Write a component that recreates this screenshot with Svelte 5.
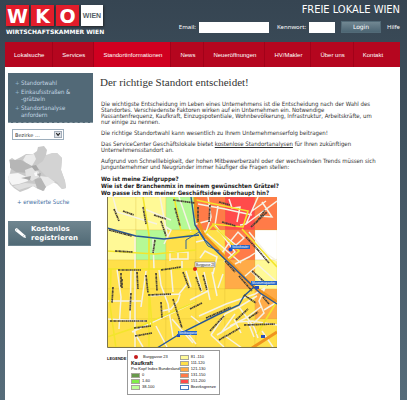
<script>
  const nav = ['Lokalsuche', 'Services', 'Standortinformationen', 'News', 'Neueröffnungen', 'HV/Makler', 'Über uns', 'Kontakt'];
  const cols = [0, 29, 59, 89, 118, 148, 170];
  const rows = [0, 33, 63, 92, 122, 150];
  const L = '#fff996', G = '#b5f996', A = '#ffe04a', O = '#ffab48', R = '#ff7b48', X = '#ff4b4b', W = '#ffffff';
  const cells = [
    [L, L, G, R, X, R],
    [L, G, A, A, R, W],
    [A, A, A, A, O, L],
    [A, A, A, A, A, O],
    [A, A, A, A, A, A]
  ];
  const legendLeft = [['#68994b', '0'], ['#80ee48', '1-60'], ['#bfff99', '38-100']];
  const legendRight = [['#fffa99', '81 -110'], ['#ffe04a', '111-120'], ['#ffab48', '121-130'], ['#ff7b48', '131-150'], ['#ff4b4b', '151-200']];
</script>

<div class="page">
  <header>
    <a class="logo" href="#start" aria-label="WKO Wien">
      <span class="tiles"><b>W</b><b>K</b><b>O</b><i>WIEN</i></span>
      <span class="sub">WIRTSCHAFTSKAMMER WIEN</span>
    </a>
    <div class="right">
      <div class="title">FREIE LOKALE WIEN</div>
      <form>
        <label for="mail">Email:</label><input id="mail" class="mail" type="text" />
        <label for="pw">Kennwort:</label><input id="pw" class="pw" type="password" />
        <button type="button">Login</button>
        <a href="#hilfe">Hilfe</a>
      </form>
    </div>
  </header>
  <nav>
    {#each nav as item, i}
      <a href="#{i}" class:active={i === 2}>{item}</a>
    {/each}
  </nav>
  <div class="content">
    <aside>
      <ul>
        <li><a href="#wahl">Standortwahl</a></li>
        <li><a href="#gebiete">Einkaufsstraßen &amp;<br />-grätzeln</a></li>
        <li><a href="#analyse">Standortanalyse<br />anfordern</a></li>
      </ul>
      <div class="pick">
        <select aria-label="Bezirke"><option>Bezirke ...</option></select>
        <svg viewBox="0 0 10 8" aria-hidden="true"><rect x=".5" y=".5" width="8" height="7" fill="#dde1e7" stroke="#9aa5b2" /><path d="M2.5 2.5 4.5 5 6.5 2.5" fill="none" stroke="#222" stroke-width="1.3" /></svg>
      </div>
      <svg class="wien" viewBox="0 0 58 46" role="img" aria-label="Wiener Bezirke">
        <path fill="#c9c9c9" d="M1 14 4 12 7 14 13 11 18 8 25 8 29 5 30 1 36 0 39 4 38 9 42 12 44 7 49 7 54 12 53 24 57 35 58 42 54 43 49 38 45 36 38 40 36 45 30 43 25 40 20 43 12 46 6 42 2 38 0 32 2 27 3 22Z" />
        <path fill="#d3d3d3" d="M38 9 44 7 49 7 54 12 53 24 57 35 58 42 54 43 49 36 39 31 28 20 35 15Z" />
        <path fill="#ebebeb" d="M15 14 18 9 26 8 28 13 24 20 18 17Z" />
        <path fill="#f5f5f5" d="M1 28 10 27 19 31 20 35 11 38 4 39 0 33Z" />
        <path fill="#eaeaea" d="M32 30 40 31 47 36 38 41 34 36Z" />
        <path fill="#dfdfdf" d="M5 40 17 37 28 38 30 42 25 40 17 42 11 44Z" />
        <path fill="#b6b6b6" d="M2 14 13 14 22 19 27 23 20 27 8 26 2 22ZM26 33 33 32 38 41 35 45 29 42Z" />
        <path fill="#e2e2e2" d="M17 24 25 21 31 26 31 31 24 35 18 31Z" />
        <path fill="#a8a8a8" d="M23 20 28 19 31 24 27 25ZM13 32 23 30 22 34ZM29 28 33 27 32 31Z" />
        <path fill="#fafafa" d="M26 27 29 26 29 30 27 30Z" />
      </svg>
      <a class="more" href="#suche"><span>+</span> erweiterte Suche</a>
      <button type="button" class="reg">
        <svg viewBox="0 0 12 12" aria-hidden="true"><path fill="#fff" d="M0 1 2 0 11 8 12 11 9 10 0 3Z" /><path d="M2.500 1 1 3M8 10 10 7.500" stroke="#70858f" stroke-width=".5" /></svg>
        <span>Kostenlos<br />registrieren</span>
      </button>
    </aside>
    <main>
      <h1>Der richtige Standort entscheidet!</h1>
      <p>Die wichtigste Entscheidung im Leben eines Unternehmens ist die Entscheidung nach der Wahl des<br />Standortes. Verschiedenste Faktoren wirken auf ein Unternehmen ein. Notwendige<br />Passantenfrequenz, Kaufkraft, Einzugspotentiale, Wohnbevölkerung, Infrastruktur, Arbeitskräfte, um<br />nur einige zu nennen.</p>
      <p>Die richtige Standortwahl kann wesentlich zu Ihrem Unternehmenserfolg beitragen!</p>
      <p>Das ServiceCenter Geschäftslokale bietet <a href="#standort">kostenlose Standortanalysen</a> für Ihren zukünftigen<br />Unternehmensstandort an.</p>
      <p>Aufgrund von Schnelllebigkeit, der hohen Mitbewerberzahl oder der wechselnden Trends müssen sich<br />Jungunternehmer und Neugründer immer häufiger die Fragen stellen:</p>
      <p class="ask">Wo ist meine Zielgruppe?<br />Wie ist der Branchenmix in meinem gewünschten Grätzel?<br />Wo passe ich mit meiner Geschäftsidee überhaupt hin?</p>
      <svg class="map" viewBox="0 0 170 151" role="img" aria-label="Kaufkraft rund um Burggasse 23">
        {#each cells as row, r}
          {#each row as fill, c}
            <rect x={cols[c]} y={rows[r]} width={cols[c + 1] - cols[c]} height={rows[r + 1] - rows[r]} {fill} stroke="#cfae30" stroke-opacity=".4" stroke-width=".5" />
          {/each}
        {/each}
        <g fill="none" stroke="#f6f2e4" stroke-width="1.500">
          <path d="M6 0 10 15 50 27M35 11 64 23M53 0 61 42M72 0 84 35M57 47 64 33 59 30M46 42 47 72M28 40V150M10 72 14 100 12 132M24 72 23 125M39 74 34 110M52 73 54 88 61 107 66 140M64 72 66 95M79 74 84 90M0 104H34M41 99 72 97 80 87M73 97 71 104 64 112 55 114M63 64V55H81V62H63M71 62V54M75 64V73M0 122 39 124M25 135 88 105M27 135 36 150M49 129 60 150M65 122 86 146M78 133 89 147" />
          <path d="M91 7 118 12 145 18M101 0 104 20 99 35M111 9 108 28M89 27 104 23M108 28 128 55 117 65M93 31 134 66M110 33 129 48 137 41 131 35 122 46M122 46 115 56M142 35 160 57 170 64M139 27 170 4M151 0 139 27 133 28M122 2 125 11 133 10 130 25M155 5 165 20 152 19M145 14 159 4M128 67 142 60 148 56M137 80 151 68 170 85M144 74 155 85M89 73 95 95M97 75 103 103M105 75 110 99M116 77 111 91M83 103 101 94M93 61 98 54 110 60 106 77M89 45 102 42" />
          <path d="M104 138 118 117 132 110 150 99M114 136 128 117M110 138 131 125 145 124 170 128M123 129 139 121 155 109M132 110 147 130 151 141M127 122 134 136M118 139 135 151M141 125 147 140M84 119 93 126M157 113 170 105M155 134 166 150M104 138 117 150M92 119 119 107 148 97 158 91M158 91 152 104 157 116 144 129" />
        </g>
        <path d="M149 34 158 45 170 34V62L160 54ZM139 29 149 34" fill="#fff" fill-opacity=".5" />
        <g fill="none" stroke="#f3e52c" stroke-width="1.600">
          <path d="M36 0 42 38 42 151M0 54 48 57 89 53M0 72 89 72M0 140 36 128 88 105M4 72 3 108 9 151M42 90 45 129M67 0 74 34M65 42 89 36M89 3 141 14 136 30 105 27M94 42 106 28 132 54 120 64M135 32 170 70M150 137 169 106M73 33 95 34" />
        </g>
        <path d="M88 0 89 19 97 38 132 75 144 88 170 105" fill="none" stroke="#ef941e" stroke-width="3" />
        <path d="M145 151 170 135" fill="none" stroke="#ef941e" stroke-width="3" />
        <path d="M0 31 29 39 57 42 92 38M84 0 88 28 98 43 125 69 153 96 170 107M50 151 76 135 110 118 132 108 137 99 147 90" fill="none" stroke="#285795" stroke-width="1.400" />
        <path d="M79 52V43L92 35 101 49 112 54" fill="none" stroke="#2f639e" stroke-width="1" />
        <g fill="none" stroke="#474036" stroke-width="1.700" stroke-dasharray="2 .5 1 .4">
          <path d="M7 12 12 24M16 14 27 18M36 10 39 27M47 18 59 22M68 11 73 29M66 3 88 6M54 24 59 39M2 33 25 39M48 43 46 56M8 54 26 55M11 73 34 73M14 76 14 90M30 75 31 92M49 76 50 94M54 73 74 70M76 75 82 91M91 10 91 25M103 8 102 25M112 5 123 8M115 25 129 29M144 30 160 15M139 40 151 53M151 53 162 66M149 26 158 13M118 64 128 75M132 79 145 94M156 100 162 107M6 90 5 106M15 82 15 91M39 78 41 96M24 96 23 114M41 98 64 97M54 105 55 121M66 102 75 131M3 124 40 124M27 131 44 129M28 139 45 136M89 80 94 94M96 78 100 93M83 112 95 106M99 121 124 110M103 134 117 119M112 143 133 131M137 98 149 106M129 123 141 112M142 121 151 115M137 128 168 127M145 74 161 88" />
        </g>
        <circle cx="88" cy="72" r="2" fill="#df2412" />
        <circle cx="123.500" cy="52.500" r="2" fill="#164cc8" />
        <path d="M70 137h3v3h-3ZM154 138h4v3h-4ZM148 89h4v3h-4Z" fill="#294eba" />
        <rect x="88" y="65" width="20" height="5" fill="#fff" stroke="#555" stroke-width=".5" />
        <rect x="124" y="48" width="19" height="4" fill="#2467c9" />
        <rect x="144" y="84" width="26" height="4" fill="#2467c9" />
        <rect x="71" y="134" width="19" height="4" fill="#2467c9" />
        <g fill="#fff" font-family="Liberation Sans" font-size="3"><text x="125" y="51">Volkstheater</text><text x="145" y="87">Museumsquartier</text><text x="72" y="137">Neubaugasse</text></g>
        <text x="89" y="69" font-size="3" font-family="Liberation Sans" fill="#111">Burggasse 23</text>
        <path d="M.5 0V150.500H170" fill="none" stroke="#7d744c" />
      </svg>
      <div class="legend">
        <span class="cap">LEGENDE</span>
        <div class="box">
          <div class="lc">
            <div class="row dot"><i></i>Burggasse 23</div>
            <div class="row big">Kaufkraft</div>
            <div class="row">Pro Kopf Index Bundesland</div>
            {#each legendLeft as [c, t]}
              <div class="row"><i style="background:{c}"></i>{t}</div>
            {/each}
          </div>
          <div class="rc">
            {#each legendRight as [c, t]}
              <div class="row"><i style="background:{c}"></i>{t}</div>
            {/each}
            <div class="row edge"><i></i>Bezirksgrenze</div>
          </div>
        </div>
      </div>
    </main>
  </div>
</div>

<style>
  :global(body) { margin: 0; background: #566b79; }
  .page { box-sizing: border-box; min-height: 100vh; padding: 0 7px 0 5px; display: flex; flex-direction: column; background: linear-gradient(#364552, #40525f 35%, #566c7a); font-family: "DejaVu Sans Condensed", "DejaVu Sans", sans-serif; font-size: 6px; line-height: 6px; color: #333; }
  a { color: inherit; text-decoration: none; }
  header { display: flex; justify-content: space-between; height: 42px; color: #fff; }
  .logo { padding: 5px 0 0 1px; display: flex; flex-direction: column; gap: 2px; }
  .tiles { display: flex; gap: 2px; }
  .tiles b, .tiles i { width: 23px; height: 21px; display: flex; align-items: center; justify-content: center; background: #e21d2b; font: bold 19px/20px "DejaVu Sans", sans-serif; box-shadow: 1px 1px 2px #222c; }
  .tiles i { width: 22px; background: #fff; color: #555f68; font: bold 7px/20px "Liberation Sans", sans-serif; }
  .sub { font: bold 6px/7px "DejaVu Sans", sans-serif; white-space: nowrap; }
  .right { display: flex; flex-direction: column; align-items: flex-end; }
  .title { padding-top: 3px; font-size: 11px; line-height: 14px; white-space: nowrap; }
  form { display: flex; align-items: center; padding-top: 4px; font-family: "Noto Sans", sans-serif; }
  form input { box-sizing: border-box; height: 11px; border: 0; padding: 0 2px; margin: 0 8px 0 3px; background: #fff; font-size: 6px; }
  .mail { width: 70px; }
  .pw { width: 26px; margin-right: 6px; }
  form button { width: 40px; height: 12px; margin-right: 6px; padding: 0; border: 1px solid #526a77; background: linear-gradient(#718792, #4c6573); color: #fff; font: 6px/8px "DejaVu Sans", sans-serif; }
  nav { display: flex; height: 25px; background: #b5061f; color: #fff; font-family: "Liberation Sans", sans-serif; }
  nav a { flex: none; display: flex; align-items: center; padding: 0 9px; box-shadow: inset -1px 0 #a20119; }
  nav a:last-child { box-shadow: none; }
  nav .active { background: #d00020; }
  .content { flex: 1; display: flex; background: #fff; }
  aside { flex: none; width: 85px; padding: 6px 0 0 3px; }
  ul { box-sizing: border-box; margin: 0; padding: 6px 0 3px 7px; height: 50px; background: #526977; border-bottom: 1px dashed #8899a2; color: #c5d8e4; line-height: 7px; list-style: none; display: flex; flex-direction: column; gap: 2px; }
  li { display: flex; }
  li::before { content: "+"; width: 6px; color: #91b4c9; }
  .pick { position: relative; width: 52px; height: 11px; margin: 6px 0 6px 4px; }
  select { appearance: none; display: block; box-sizing: border-box; width: 100%; height: 11px; border: 1px solid #9daebc; border-radius: 0; padding: 0 2px; background: #fff; color: #333; font: 5px/8px "DejaVu Sans", sans-serif; }
  .pick svg { position: absolute; right: 1px; top: 2px; width: 9px; height: 7px; pointer-events: none; }
  .wien { display: block; width: 58px; height: 46px; }
  .more { display: block; margin: 7px 0 16px 9px; color: #426fa2; }
  .reg { box-sizing: border-box; width: 83px; height: 25px; display: flex; align-items: center; gap: 5px; padding: 0 6px; border: 1px solid #6d8490; background: linear-gradient(#6f858f, #516a76); color: #fff; text-align: left; font: bold 7px/9px "DejaVu Sans", sans-serif; }
  .reg svg { width: 11px; height: 11px; flex: none; }
  main { flex: 1; min-width: 0; padding: 8px 0 4px 8px; }
  h1 { margin: 0 0 12px -1px; font: 11px/14px "Liberation Serif", serif; color: #333; }
  p { margin: 0 0 5px; white-space: nowrap; }
  p a { text-decoration: underline; }
  .ask { margin-bottom: 1px; font-weight: bold; line-height: 7px; color: #222; }
  .map { display: block; width: 170px; height: 151px; margin-left: 6px; }
  .legend { display: flex; margin: 2px 0 0 6px; font: 4px/6px "Liberation Sans", sans-serif; color: #111; }
  .cap { width: 20px; padding-top: 6px; font-weight: bold; }
  .box { box-sizing: border-box; width: 93px; height: 45px; padding: 3px; display: flex; border: 1px solid #999; white-space: nowrap; }
  .lc { width: 51px; }
  .row { display: flex; align-items: center; gap: 2px; height: 6px; }
  .row i { box-sizing: border-box; flex: none; width: 9px; height: 5px; border: 1px solid #a7a59b; }
  .big { font-size: 5px; font-weight: bold; }
  .dot i { width: 4px; height: 4px; margin: 0 3px; border: 0; border-radius: 50%; background: #c51b1b; }
  .edge i { border-color: #4a7abc; background: #fff; }
</style>
